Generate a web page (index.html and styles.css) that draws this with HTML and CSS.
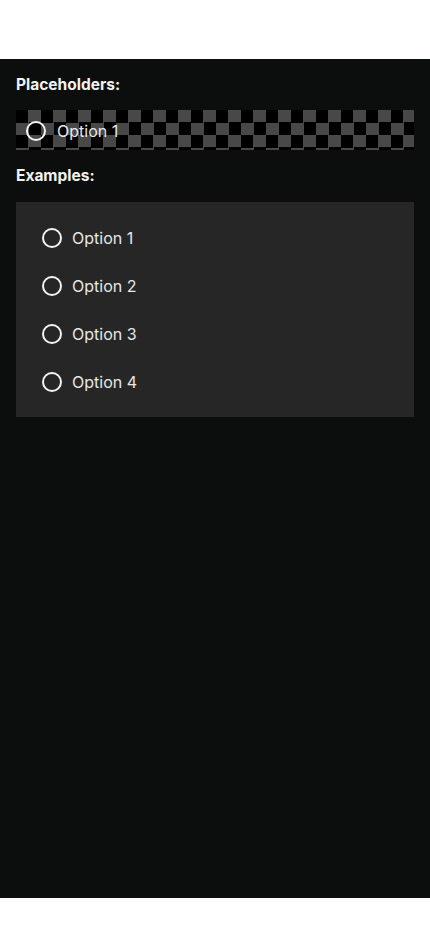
FILE: index.html
```html
<!DOCTYPE html>
<html>
<head>
<meta charset="utf-8">
<link rel="stylesheet" href="styles.css">
</head>
<body>
<main class="screen">
  <h2 class="heading">Placeholders:</h2>
  <div class="placeholder">
    <div class="option">
      <span class="radio"></span>
      <span class="label">Option 1</span>
    </div>
  </div>
  <h2 class="heading heading-examples">Examples:</h2>
  <div class="card">
    <div class="row"><span class="radio"></span><span class="label">Option 1</span></div>
    <div class="row"><span class="radio"></span><span class="label">Option 2</span></div>
    <div class="row"><span class="radio"></span><span class="label">Option 3</span></div>
    <div class="row"><span class="radio"></span><span class="label">Option 4</span></div>
  </div>
</main>
</body>
</html>
```
FILE: styles.css
```css
html, body {
  margin: 0;
  padding: 0;
  background: #ffffff;
}
body {
  padding-top: 59px;
  height: 932px;
  box-sizing: border-box;
  font-family: Inter, "Noto Sans", sans-serif;
}
.screen {
  height: 839px;
  background: #0c0e0d;
  padding: 16px 16px 0 16px;
  box-sizing: border-box;
  display: flex;
  flex-direction: column;
}
.heading {
  margin: 0;
  font-size: 15.5px;
  line-height: 20px;
  font-weight: 700;
  color: #f2f2f2;
}
.placeholder {
  margin-top: 15px;
  height: 40px;
  background: repeating-conic-gradient(#484848 0 25%, #000000 0 50%) 0 0 / 25px 25px;
  display: flex;
  align-items: center;
  padding-left: 10px;
  padding-top: 1px;
  box-sizing: border-box;
}
.option {
  display: flex;
  align-items: center;
  gap: 11px;
}
.heading-examples {
  margin-top: 16px;
}
.card {
  margin-top: 16px;
  background: #262626;
  padding: 12px 0 11px 26px;
  display: flex;
  flex-direction: column;
}
.row {
  height: 48px;
  display: flex;
  align-items: center;
  gap: 10px;
}
.radio {
  width: 20px;
  height: 20px;
  border: 2px solid #f4f4f4;
  border-radius: 50%;
  box-sizing: border-box;
  flex: none;
}
.label {
  font-size: 16px;
  line-height: 20px;
  color: #e8e8e8;
}
```
